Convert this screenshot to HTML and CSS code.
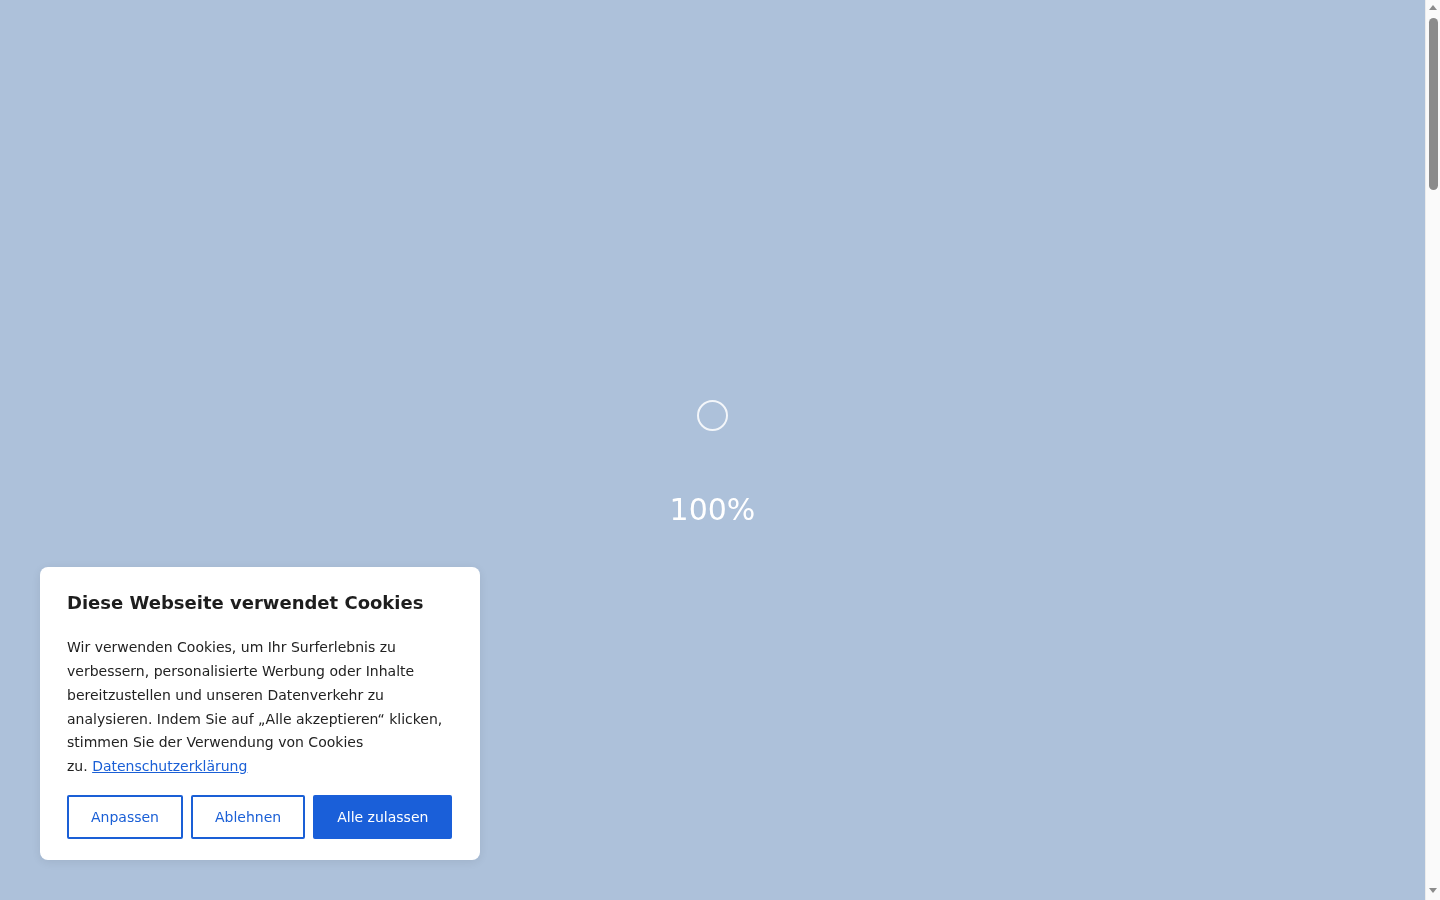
FILE: index.html
```html
<!DOCTYPE html>
<html lang="de">
<head>
    <meta charset="UTF-8">
    <meta name="viewport" content="width=device-width, initial-scale=1.0">
    <title>Laden...</title>
    <link rel="stylesheet" href="styles.css">
</head>
<body>
    <!-- Loader overlay -->
    <div class="loader">
        <div class="spinner"></div>
        <div class="progress">100%</div>
    </div>

    <!-- Cookie banner -->
    <div class="cookie-banner">
        <h2>Diese Webseite verwendet Cookies</h2>
        <p>Wir verwenden Cookies, um Ihr Surferlebnis zu verbessern, personalisierte Werbung oder Inhalte bereitzustellen und unseren Datenverkehr zu analysieren. Indem Sie auf „Alle akzeptieren“ klicken, stimmen Sie der Verwendung von Cookies <span class="nowrap">zu. <a href="#">Datenschutzerklärung</a></span></p>
        <div class="cookie-actions">
            <button class="btn btn-outline">Anpassen</button>
            <button class="btn btn-outline">Ablehnen</button>
            <button class="btn btn-primary">Alle zulassen</button>
        </div>
    </div>

    <!-- Window scrollbar -->
    <div class="scrollbar">
        <span class="arrow arrow-up"></span>
        <span class="thumb"></span>
        <span class="arrow arrow-down"></span>
    </div>
</body>
</html>
```

FILE: styles.css
```css
/* Reset */
* {
    margin: 0;
    padding: 0;
    box-sizing: border-box;
}

html, body {
    height: 100%;
    overflow: hidden;
}

body {
    font-family: 'DejaVu Sans', 'Liberation Sans', sans-serif;
    background: #adc1da;
    color: #222;
}

/* Loader */
.loader {
    position: fixed;
    top: 0;
    left: 0;
    right: 15px;
    bottom: 0;
    display: flex;
    flex-direction: column;
    align-items: center;
    justify-content: center;
    padding-top: 26px;
    gap: 61px;
}

.spinner {
    width: 31px;
    height: 31px;
    border: 2px solid rgba(255, 255, 255, 0.85);
    border-radius: 50%;
}

.progress {
    font-size: 30px;
    color: #fff;
    line-height: 35px;
}

/* Cookie banner */
.cookie-banner {
    position: fixed;
    left: 40px;
    bottom: 40px;
    width: 440px;
    background: #fff;
    border-radius: 8px;
    padding: 25px 27px 21px;
    box-shadow: 0 2px 10px rgba(0, 0, 0, 0.08);
}

.cookie-banner h2 {
    font-size: 18px;
    font-weight: bold;
    color: #1e1e1e;
    line-height: 21px;
    margin-bottom: 23px;
}

.cookie-banner p {
    font-size: 14px;
    line-height: 23.8px;
    color: #222;
}

.cookie-banner a {
    color: #1a5fd6;
    text-decoration: underline;
}

.nowrap {
    white-space: nowrap;
}

.cookie-actions {
    display: flex;
    gap: 8px;
    margin-top: 16px;
}

.btn {
    font-family: inherit;
    font-size: 14px;
    height: 44px;
    padding: 0 22px;
    border-radius: 2px;
    white-space: nowrap;
    cursor: pointer;
}

.btn-outline {
    background: #fff;
    color: #1a5fd6;
    border: 2px solid #1a5fd6;
}

.btn-primary {
    background: #1a5fd9;
    color: #fff;
    border: 2px solid #1a5fd9;
}

/* Scrollbar */
.scrollbar {
    position: fixed;
    top: 0;
    right: 0;
    width: 15px;
    height: 100%;
    background: #fafafa;
    border-left: 1px solid #ececec;
}

.thumb {
    position: absolute;
    top: 18px;
    left: 3px;
    width: 9px;
    height: 172px;
    border-radius: 5px;
    background: #8b8b8b;
}

.arrow {
    position: absolute;
    left: 3px;
    width: 0;
    height: 0;
    border-left: 4px solid transparent;
    border-right: 4px solid transparent;
}

.arrow-up {
    top: 5px;
    border-bottom: 5px solid #8b8b8b;
}

.arrow-down {
    bottom: 7px;
    border-top: 5px solid #8b8b8b;
}
```
